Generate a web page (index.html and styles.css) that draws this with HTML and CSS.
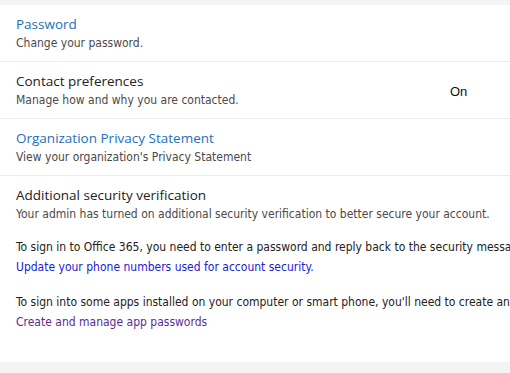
FILE: index.html
```html
<!DOCTYPE html>
<html lang="en">

<head>
    <meta charset="UTF-8">
    <title>Security &amp; privacy</title>
    <link rel="stylesheet" href="styles.css">
</head>

<body>
    <div class="panel">
        <div class="row">
            <div class="row-text">
                <a class="title link" href="#">Password</a>
                <div class="sub">Change your password.</div>
            </div>
        </div>
        <div class="row">
            <div class="row-text">
                <div class="title">Contact preferences</div>
                <div class="sub">Manage how and why you are contacted.</div>
            </div>
            <div class="state">On</div>
        </div>
        <div class="row">
            <div class="row-text">
                <a class="title link" href="#">Organization Privacy Statement</a>
                <div class="sub">View your organization's Privacy Statement</div>
            </div>
        </div>
        <div class="row last">
            <div class="row-text">
                <div class="title">Additional security verification</div>
                <div class="sub">Your admin has turned on additional security verification to better secure your account.</div>
            </div>
        </div>
        <div class="note">
            <p>To sign in to Office 365, you need to enter a password and reply back to the security message sent to your phone.</p>
            <a class="blue" href="#">Update your phone numbers used for account security.</a>
        </div>
        <div class="note second">
            <p>To sign into some apps installed on your computer or smart phone, you'll need to create an app password.</p>
            <a class="purple" href="#">Create and manage app passwords</a>
        </div>
    </div>
</body>

</html>
```

FILE: styles.css
```css
html,
body {
    margin: 0;
    height: 100%;
    overflow: hidden;
    background-color: #f4f4f4;
}

.panel {
    margin-top: 5px;
    height: 357px;
    overflow: hidden;
    background-color: #fff;
    font-family: "DejaVu Sans Condensed", Tahoma, sans-serif;
}

.row {
    display: flex;
    align-items: center;
    padding: 10px 16px;
    border-bottom: 1px solid #ececec;
}

.row.last {
    border-bottom: none;
}

.row-text {
    flex: 1;
    min-width: 0;
}

.title {
    display: block;
    font-family: "Open Sans", sans-serif;
    font-size: 13.5px;
    line-height: 18px;
    color: #222;
    text-decoration: none;
    white-space: nowrap;
}

.title.link {
    color: #2370bb;
}

.sub {
    margin-top: 2px;
    font-size: 12px;
    line-height: 16px;
    color: #4a4a4a;
    white-space: nowrap;
}

.state {
    width: 44px;
    padding-top: 3px;
    font-family: "Liberation Sans", Arial, sans-serif;
    font-size: 13px;
    color: #111;
}

.note {
    padding: 0 16px;
    margin-top: 5px;
    font-size: 12px;
    line-height: 20px;
    white-space: nowrap;
    overflow: hidden;
}

.note.second {
    margin-top: 15px;
}

.note p {
    margin: 0;
    color: #222;
}

.note a {
    text-decoration: none;
}

.note a.blue {
    color: #2020d4;
}

.note a.purple {
    color: #5a2d91;
}
```
